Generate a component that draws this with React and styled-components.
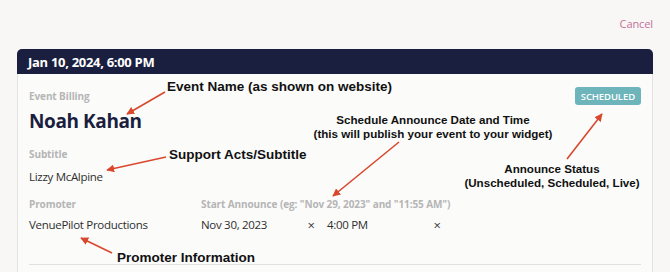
import styled, { createGlobalStyle } from "styled-components";

const GlobalStyle = createGlobalStyle`
  body {
    margin: 0;
    background: #f8f7f5;
    font-family: "Open Sans", "Noto Sans", sans-serif;
  }
`;

const Page = styled.div`
  position: relative;
  width: 670px;
  height: 272px;
  overflow: hidden;
  padding: 0 17px;
  box-sizing: border-box;
`;

const TopBar = styled.div`
  height: 49px;
  box-sizing: border-box;
  padding-top: 16px;
  display: flex;
  justify-content: flex-end;
  align-items: flex-start;
`;

const CancelLink = styled.a`
  font-size: 11px;
  line-height: 16px;
  letter-spacing: -0.1px;
  color: #c2719b;
  cursor: pointer;
`;

const Card = styled.section`
  background: #fbfbfa;
  border: 1px solid #e4e3e1;
  border-top: 0;
  border-radius: 5px 5px 0 0;
  height: 240px;
`;

const CardHeader = styled.header`
  height: 25px;
  margin: 0 -1px;
  padding: 0 11px;
  display: flex;
  align-items: center;
  background: #1b1f3f;
  border-radius: 5px 5px 0 0;
  color: #fff;
  font-size: 13px;
  font-weight: 700;
  letter-spacing: -0.3px;
`;

const Body = styled.div`
  padding: 15px 11px 0;
`;

const TopRow = styled.div`
  display: flex;
  justify-content: space-between;
  align-items: flex-start;
`;

const Group = styled.div`
  margin-bottom: ${(p) => p.$after ?? 14}px;
`;

const Label = styled.div`
  margin-bottom: ${(p) => p.$gap ?? 6}px;
  font-size: 10px;
  line-height: 14px;
  font-weight: 700;
  letter-spacing: -0.1px;
  color: #b5b5b5;
  white-space: nowrap;
`;

const Title = styled.h1`
  margin: 0;
  font-size: 19px;
  line-height: 24px;
  font-weight: 700;
  letter-spacing: -0.4px;
  color: #1b1f3f;
`;

const Value = styled.div`
  font-size: 11.5px;
  line-height: 16px;
  letter-spacing: -0.3px;
  color: #2e2e2e;
`;

const Badge = styled.span`
  margin-top: -2px;
  height: 18px;
  padding: 0 6px;
  display: inline-flex;
  align-items: center;
  background: #6db4bb;
  border-radius: 3px;
  color: #fff;
  font-size: 9.5px;
  font-weight: 600;
  letter-spacing: -0.1px;
`;

const Columns = styled.div`
  display: grid;
  grid-template-columns: 172px 1fr;
`;

const Inputs = styled.div`
  display: flex;
  gap: 12px;
`;

const Field = styled.div`
  width: 114px;
  display: flex;
  justify-content: space-between;
  align-items: center;
`;

const Clear = styled.span`
  font-size: 13px;
  line-height: 16px;
  color: #3a3a3a;
`;

const Divider = styled.hr`
  margin: 31px 0 0;
  border: 0;
  border-top: 1px solid #e2e1df;
`;

const Note = styled.div`
  position: absolute;
  top: ${(p) => p.$y}px;
  left: ${(p) => p.$x}px;
  transform: ${(p) => (p.$center ? "translateX(-50%)" : "none")};
  text-align: ${(p) => (p.$center ? "center" : "left")};
  font-family: "Liberation Sans", Arial, sans-serif;
  font-weight: 700;
  font-size: ${(p) => (p.$small ? 11.6 : 13.5)}px;
  line-height: 14px;
  color: #111;
  white-space: nowrap;
`;

const Arrows = styled.svg`
  position: absolute;
  top: 0;
  left: 0;
  pointer-events: none;
`;

const arrows = [
  [165, 92, 127, 114],
  [166, 157, 107, 170],
  [112, 253, 81, 238],
  [399, 142, 333, 196],
  [567, 159, 602, 114],
];

export default function App() {
  return (
    <Page>
      <GlobalStyle />
      <TopBar>
        <CancelLink>Cancel</CancelLink>
      </TopBar>
      <Card>
        <CardHeader>Jan 10, 2024, 6:00 PM</CardHeader>
        <Body>
          <TopRow>
            <Group>
              <Label>Event Billing</Label>
              <Title>Noah Kahan</Title>
            </Group>
            <Badge>SCHEDULED</Badge>
          </TopRow>
          <Group $after={12}>
            <Label $gap={8}>Subtitle</Label>
            <Value>Lizzy McAlpine</Value>
          </Group>
          <Columns>
            <Group $after={0}>
              <Label>Promoter</Label>
              <Value>VenuePilot Productions</Value>
            </Group>
            <Group $after={0}>
              <Label>Start Announce (eg: "Nov 29, 2023" and "11:55 AM")</Label>
              <Inputs>
                <Field>
                  <Value>Nov 30, 2023</Value>
                  <Clear>×</Clear>
                </Field>
                <Field>
                  <Value>4:00 PM</Value>
                  <Clear>×</Clear>
                </Field>
              </Inputs>
            </Group>
          </Columns>
          <Divider />
        </Body>
      </Card>

      <Note $x={167} $y={80}>Event Name (as shown on website)</Note>
      <Note $x={433} $y={113} $center $small>
        Schedule Announce Date and Time
        <br />
        (this will publish your event to your widget)
      </Note>
      <Note $x={169} $y={148}>Support Acts/Subtitle</Note>
      <Note $x={552} $y={162} $center $small>
        Announce Status
        <br />
        (Unscheduled, Scheduled, Live)
      </Note>
      <Note $x={117} $y={251}>Promoter Information</Note>

      <Arrows width="670" height="272" viewBox="0 0 670 272">
        <defs>
          <marker
            id="head"
            viewBox="0 0 10 10"
            refX="9"
            refY="5"
            markerWidth="5"
            markerHeight="5"
            orient="auto"
          >
            <path d="M0 0 L10 5 L0 10 Z" fill="#d9482c" />
          </marker>
        </defs>
        {arrows.map(([x1, y1, x2, y2], i) => (
          <line
            key={i}
            x1={x1}
            y1={y1}
            x2={x2}
            y2={y2}
            stroke="#d9482c"
            strokeWidth="1.6"
            markerEnd="url(#head)"
          />
        ))}
      </Arrows>
    </Page>
  );
}
